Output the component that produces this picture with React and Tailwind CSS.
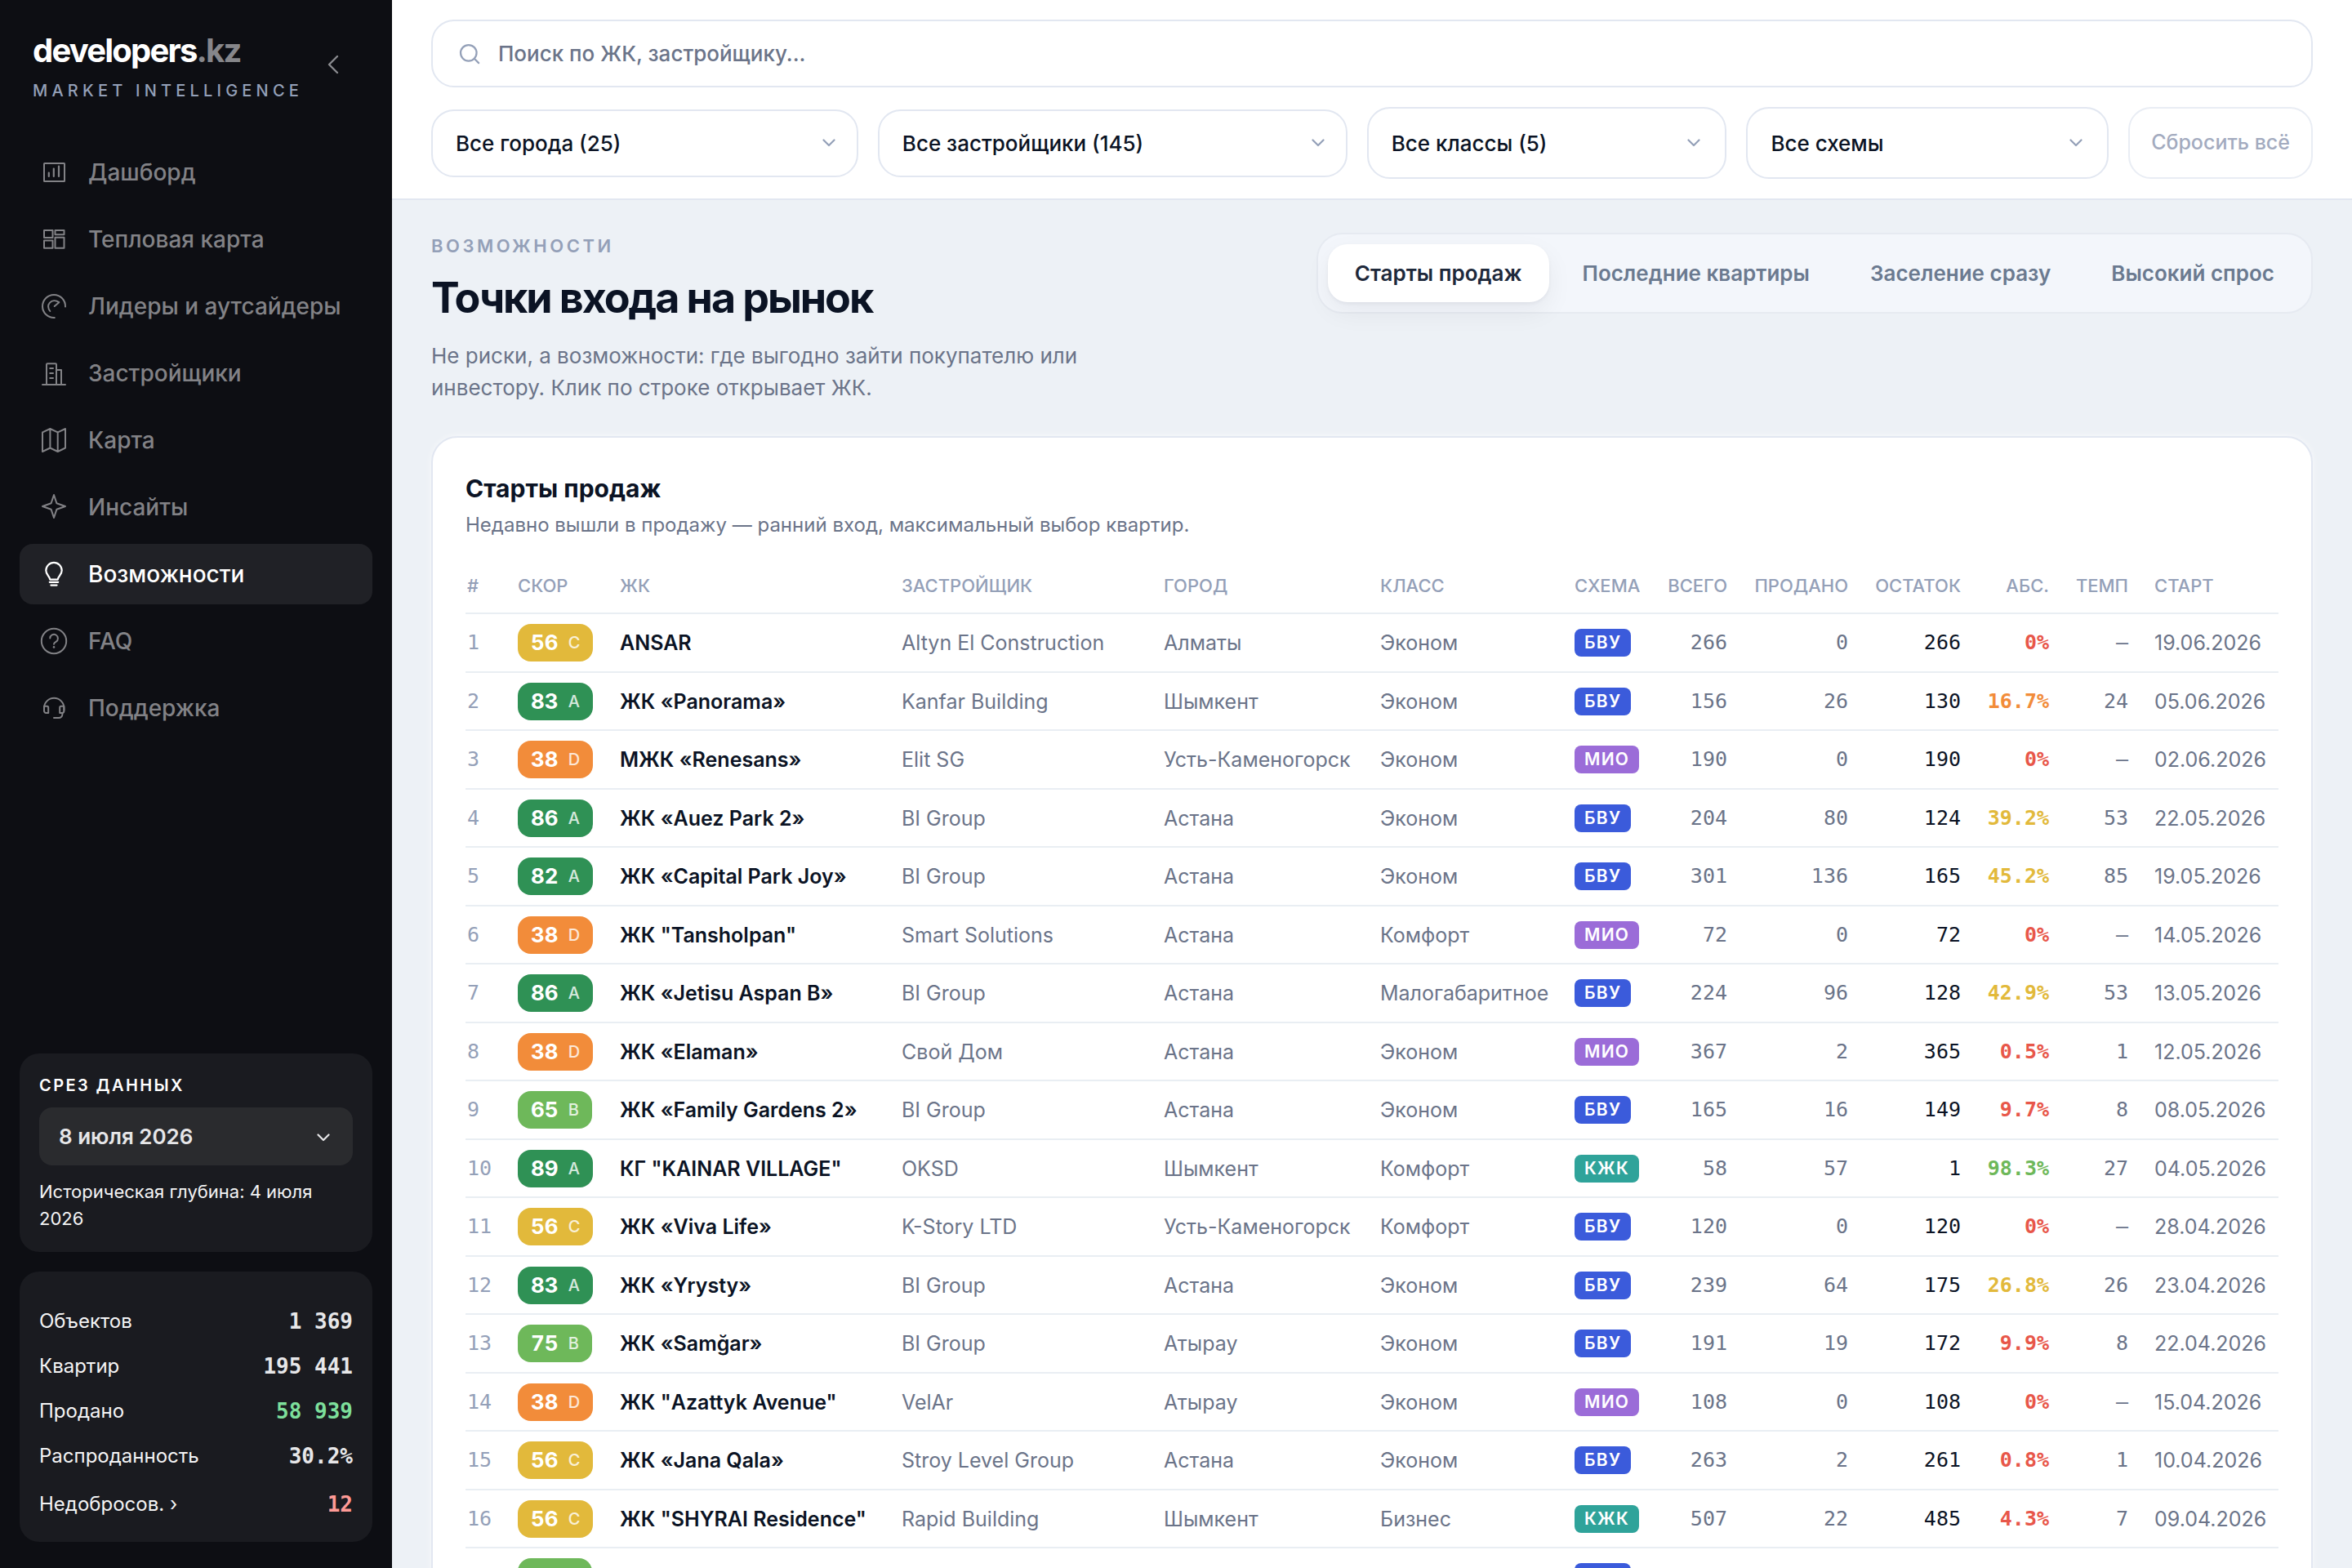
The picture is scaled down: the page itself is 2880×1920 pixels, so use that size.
import React from "react";

const MONO = "font-['DejaVu_Sans_Mono',monospace]";

function Icon({ children, className = "size-10" }) {
  return (
    <svg
      viewBox="0 0 40 40"
      className={className}
      fill="none"
      stroke="currentColor"
      strokeWidth="2"
      strokeLinecap="round"
      strokeLinejoin="round"
      aria-hidden="true"
    >
      {children}
    </svg>
  );
}

const NAV = [
  {
    label: "Дашборд",
    icon: (
      <Icon>
        <rect x="8" y="9" width="25" height="22" rx="0.5" />
        <path d="M13.8 20.5V25M19.8 15.5V25M26 12.5V25" strokeWidth="2.2" />
      </Icon>
    ),
  },
  {
    label: "Тепловая карта",
    icon: (
      <Icon>
        <rect x="8" y="9" width="10.5" height="9" />
        <rect x="21.5" y="9" width="11" height="5.2" />
        <rect x="8" y="21.5" width="10.5" height="9.2" />
        <rect x="21.5" y="17.8" width="11" height="12.9" />
      </Icon>
    ),
  },
  {
    label: "Лидеры и аутсайдеры",
    icon: (
      <Icon>
        <path d="M34 20.5A14 14 0 1 0 20.8 34" />
        <path d="M15.3 26C12.6 22.6 12.3 18.4 15 15.6C17.8 12.7 22.4 12.6 26.3 15.2L20.7 20" />
      </Icon>
    ),
  },
  {
    label: "Застройщики",
    icon: (
      <Icon>
        <path d="M6 34H34M11 34V9.2a1 1 0 0 1 1-1h10a1 1 0 0 1 1 1V34M23 16h6V34" />
        <path d="M15.2 14H19M15.2 20H19M15.2 26H19" />
      </Icon>
    ),
  },
  {
    label: "Карта",
    icon: (
      <Icon>
        <path d="M6 10.3L15.4 6L24.7 10.3L34 6V29.5L24.7 34L15.4 29.5L6 34ZM15.4 6V29.5M24.7 10.3V34" />
      </Icon>
    ),
  },
  {
    label: "Инсайты",
    icon: (
      <Icon>
        <path d="M20 5L23.4 15.3L34 19L23.4 22.7L20 33L16.6 22.7L6 19L16.6 15.3Z" />
      </Icon>
    ),
  },
  {
    label: "Возможности",
    active: true,
    icon: (
      <Icon>
        <path
          d="M15.2 26.6C15.2 22.8 10.3 21.3 10.3 15.6a9.7 9.7 0 0 1 19.4 0C29.7 21.3 24.8 22.8 24.8 26.6Z"
          strokeWidth="2.2"
        />
        <path d="M14.8 29.8H25.2M16.4 33.6H23.6" strokeWidth="2.2" />
      </Icon>
    ),
  },
  {
    label: "FAQ",
    icon: (
      <Icon>
        <circle cx="20" cy="20" r="15.2" />
        <path d="M15.3 16.6a4.8 4.8 0 1 1 7.2 4.2c-1.7 1-2.5 1.5-2.5 3" />
        <path d="M20 27.4v0.1" strokeWidth="2.6" />
      </Icon>
    ),
  },
  {
    label: "Поддержка",
    icon: (
      <Icon>
        <path d="M8 22.5V20a12 12 0 0 1 24.4 0V22.5" />
        <path d="M8 17.8h3.6a1.6 1.6 0 0 1 1.6 1.6V26H10.4A2.4 2.4 0 0 1 8 23.6Z" />
        <path d="M32.4 17.8h-3.6a1.6 1.6 0 0 0-1.6 1.6V26h2.8a2.4 2.4 0 0 0 2.4-2.4Z" />
        <path d="M30.4 26v1.6a4.4 4.4 0 0 1-4.4 4.4H20" />
      </Icon>
    ),
  },
];

const STATS = [
  { label: "Объектов", value: "1 369", color: "text-[#e7e7e9]" },
  { label: "Квартир", value: "195 441", color: "text-[#e7e7e9]" },
  { label: "Продано", value: "58 939", color: "text-[#7ddf9b]" },
  { label: "Распроданность", value: "30.2%", color: "text-[#e7e7e9]" },
  { label: "Недобросов. ›", value: "12", color: "text-[#ff9a96]" },
];

const FILTERS = [
  { id: "city", name: "Город", value: "Все города (25)", size: "flex-[522] h-[83px]", inset: "right-7" },
  { id: "developer", name: "Застройщик", value: "Все застройщики (145)", size: "flex-[574] h-[83px]", inset: "right-7" },
  { id: "class", name: "Класс", value: "Все классы (5)", size: "flex-[440] h-[88px]", inset: "right-8" },
  { id: "scheme", name: "Схема", value: "Все схемы", size: "flex-[443] h-[88px]", inset: "right-8" },
];

const TABS = ["Старты продаж", "Последние квартиры", "Заселение сразу", "Высокий спрос"];

const GRADE = {
  A: "bg-[#2f9155]",
  B: "bg-[#6eb85a]",
  C: "bg-[#e2b93b]",
  D: "bg-[#f28c3a]",
};

const SCHEME = {
  БВУ: "bg-[#3b5bdb]",
  МИО: "bg-[#9b6cd8]",
  КЖК: "bg-[#2fa39a]",
};

const RED = "text-[#e8574a]";
const ORANGE = "text-[#f28c3a]";
const YELLOW = "text-[#e2b93b]";
const GREEN = "text-[#6eb85a]";

const ROWS = [
  [56, "C", "ANSAR", "Altyn El Construction", "Алматы", "Эконом", "БВУ", "266", "0", "266", "0%", RED, "—", "19.06.2026"],
  [83, "A", "ЖК «Panorama»", "Kanfar Building", "Шымкент", "Эконом", "БВУ", "156", "26", "130", "16.7%", ORANGE, "24", "05.06.2026"],
  [38, "D", "МЖК «Renesans»", "Elit SG", "Усть-Каменогорск", "Эконом", "МИО", "190", "0", "190", "0%", RED, "—", "02.06.2026"],
  [86, "A", "ЖК «Auez Park 2»", "BI Group", "Астана", "Эконом", "БВУ", "204", "80", "124", "39.2%", YELLOW, "53", "22.05.2026"],
  [82, "A", "ЖК «Capital Park Joy»", "BI Group", "Астана", "Эконом", "БВУ", "301", "136", "165", "45.2%", YELLOW, "85", "19.05.2026"],
  [38, "D", 'ЖК "Tansholpan"', "Smart Solutions", "Астана", "Комфорт", "МИО", "72", "0", "72", "0%", RED, "—", "14.05.2026"],
  [86, "A", "ЖК «Jetisu Aspan B»", "BI Group", "Астана", "Малогабаритное", "БВУ", "224", "96", "128", "42.9%", YELLOW, "53", "13.05.2026"],
  [38, "D", "ЖК «Elaman»", "Свой Дом", "Астана", "Эконом", "МИО", "367", "2", "365", "0.5%", RED, "1", "12.05.2026"],
  [65, "B", "ЖК «Family Gardens 2»", "BI Group", "Астана", "Эконом", "БВУ", "165", "16", "149", "9.7%", RED, "8", "08.05.2026"],
  [89, "A", 'КГ "KAINAR VILLAGE"', "OKSD", "Шымкент", "Комфорт", "КЖК", "58", "57", "1", "98.3%", GREEN, "27", "04.05.2026"],
  [56, "C", "ЖК «Viva Life»", "K-Story LTD", "Усть-Каменогорск", "Комфорт", "БВУ", "120", "0", "120", "0%", RED, "—", "28.04.2026"],
  [83, "A", "ЖК «Yrysty»", "BI Group", "Астана", "Эконом", "БВУ", "239", "64", "175", "26.8%", YELLOW, "26", "23.04.2026"],
  [75, "B", "ЖК «Samğar»", "BI Group", "Атырау", "Эконом", "БВУ", "191", "19", "172", "9.9%", RED, "8", "22.04.2026"],
  [38, "D", 'ЖК "Azattyk Avenue"', "VelAr", "Атырау", "Эконом", "МИО", "108", "0", "108", "0%", RED, "—", "15.04.2026"],
  [56, "C", "ЖК «Jana Qala»", "Stroy Level Group", "Астана", "Эконом", "БВУ", "263", "2", "261", "0.8%", RED, "1", "10.04.2026"],
  [56, "C", 'ЖК "SHYRAI Residence"', "Rapid Building", "Шымкент", "Бизнес", "КЖК", "507", "22", "485", "4.3%", RED, "7", "09.04.2026"],
  [65, "B", "", "", "", "", "БВУ", "", "", "", "", RED, "", ""],
];

const COLUMNS = [
  { label: "#", width: "w-[48px]", align: "text-left" },
  { label: "Скор", width: "w-[125px]", align: "text-left" },
  { label: "ЖК", width: "w-[345px]", align: "text-left" },
  { label: "Застройщик", width: "w-[321px]", align: "text-left" },
  { label: "Город", width: "w-[265px]", align: "text-left" },
  { label: "Класс", width: "w-[238px]", align: "text-left" },
  { label: "Схема", width: "w-[114px]", align: "text-left" },
  { label: "Всего", width: "w-[105px]", align: "text-right" },
  { label: "Продано", width: "w-[148px]", align: "text-right" },
  { label: "Остаток", width: "w-[138px]", align: "text-right" },
  { label: "Абс.", width: "w-[108px]", align: "text-right" },
  { label: "Темп", width: "w-[97px]", align: "text-right" },
  { label: "Старт", width: "w-[168px]", align: "text-left" },
];

function Chevron({ className }) {
  return (
    <svg
      viewBox="0 0 16 10"
      className={className}
      fill="none"
      stroke="currentColor"
      strokeWidth="2.2"
      strokeLinecap="round"
      strokeLinejoin="round"
      aria-hidden="true"
    >
      <path d="M1.5 1.5L8 8L14.5 1.5" />
    </svg>
  );
}

function Sidebar() {
  return (
    <aside className="flex w-[480px] shrink-0 flex-col bg-[#0d0e13] px-6 pt-10 pb-8 text-white">
      <div className="flex items-start justify-between pr-6 pl-4">
        <div>
          <a href="#home" className="block text-[40px] leading-11 font-bold tracking-[-0.045em]">
            developers<span className="text-[#86868a]">.kz</span>
          </a>
          <div className="mt-3 text-[20px] leading-[30px] font-medium tracking-[0.26em] whitespace-nowrap text-[#94a0b8]">
            MARKET INTELLIGENCE
          </div>
        </div>
        <button
          type="button"
          aria-label="Свернуть меню"
          className="-ml-8 mt-[15px] flex size-12 shrink-0 items-center justify-center text-[#8a8b8f]"
        >
          <svg
            viewBox="0 0 14 24"
            className="h-6 w-3.5"
            fill="none"
            stroke="currentColor"
            strokeWidth="2.4"
            strokeLinecap="round"
            strokeLinejoin="round"
            aria-hidden="true"
          >
            <path d="M12 2L2 12L12 22" />
          </svg>
        </button>
      </div>

      <nav className="mt-12 flex flex-col gap-2">
        {NAV.map((item) => (
          <a
            key={item.label}
            href={"#" + item.label}
            aria-current={item.active ? "page" : undefined}
            className={
              "flex h-[74px] items-center gap-[22px] rounded-2xl px-[22px] text-[28px] leading-[42px] font-medium " +
              (item.active ? "bg-[#202126] text-white" : "text-[#828286]")
            }
          >
            {item.icon}
            <span>{item.label}</span>
          </a>
        ))}
      </nav>

      <div className="mt-auto flex flex-col gap-6">
        <section className="rounded-3xl bg-[#1a1b20] p-6">
          <label
            htmlFor="snapshot"
            className="block text-[20px] leading-[30px] font-semibold tracking-[0.12em] text-white uppercase"
          >
            Срез данных
          </label>
          <div className="relative mt-3">
            <select
              id="snapshot"
              className="h-[71px] w-full appearance-none rounded-2xl bg-[#2a2b2e] px-6 text-[26px] font-semibold text-[#e6e6e8]"
            >
              <option>8 июля 2026</option>
            </select>
            <Chevron className="pointer-events-none absolute top-8 right-7 h-2.5 w-4 text-[#e6e6e8]" />
          </div>
          <p className="mt-4 text-[22px] leading-[33px] text-[#f4f4f5]">Историческая глубина: 4 июля 2026</p>
        </section>

        <dl className="rounded-3xl bg-[#1a1b20] px-6 pt-[33px] pb-[19px]">
          {STATS.map((s) => (
            <div key={s.label} className="flex h-[55px] items-center justify-between last:mt-1">
              <dt className="text-[24px] leading-9 text-[#f4f4f5]">{s.label}</dt>
              <dd className={`${MONO} text-[26px] leading-9 font-bold ${s.color}`}>{s.value}</dd>
            </div>
          ))}
        </dl>
      </div>
    </aside>
  );
}

function Toolbar() {
  return (
    <header className="border-b-2 border-[#e2e7f1] bg-white px-12 py-6">
      <div className="flex h-[83px] items-center gap-[22px] rounded-[28px] border-2 border-[#e2e7f1] px-8 text-[#94a0b8]">
        <svg
          viewBox="0 0 28 28"
          className="size-[26px] shrink-0"
          fill="none"
          stroke="currentColor"
          strokeWidth="2.4"
          strokeLinecap="round"
          aria-hidden="true"
        >
          <circle cx="12.7" cy="12.7" r="10.5" />
          <path d="M20.5 20.5L26 26" />
        </svg>
        <input
          type="search"
          aria-label="Поиск"
          placeholder="Поиск по ЖК, застройщику..."
          className="h-full w-full bg-transparent text-[26px] font-medium text-[#0b1324] outline-none placeholder:text-[#6b7489]"
        />
      </div>
      <div className="mt-6 flex items-center gap-6">
        {FILTERS.map((f) => (
          <div key={f.id} className={"relative " + f.size}>
            <select
              id={f.id}
              aria-label={f.name}
              className="h-full w-full appearance-none rounded-[28px] border-2 border-[#e2e7f1] bg-white px-7 text-[26px] font-medium text-[#0b1324]"
            >
              <option>{f.value}</option>
            </select>
            <div className={"pointer-events-none absolute inset-y-0 flex items-center " + f.inset}>
              <Chevron className="h-2.5 w-4 text-[#94a0b8]" />
            </div>
          </div>
        ))}
        <button
          type="button"
          className="h-[88px] rounded-[28px] border-2 border-[#e9edf4] px-[26px] text-[25px] font-medium whitespace-nowrap text-[#a3abbf]"
        >
          Сбросить всё
        </button>
      </div>
    </header>
  );
}

function DealsTable() {
  const cell = "border-b-2 border-[#e9eef3] p-0 px-4 whitespace-nowrap first:pl-0.5";
  return (
    <table className="mt-6 w-full table-fixed border-separate border-spacing-0 text-[25px] leading-9 text-[#6b7489]">
      <thead>
        <tr>
          {COLUMNS.map((c) => (
            <th
              key={c.label}
              scope="col"
              className={`${c.width} ${c.align} border-b-2 border-[#e9eef3] px-4 py-4 text-[22px] leading-[33px] font-medium whitespace-nowrap text-[#94a0b8] uppercase first:pl-0.5`}
            >
              {c.label}
            </th>
          ))}
        </tr>
      </thead>
      <tbody>
        {ROWS.map(([score, grade, name, dev, city, cls, scheme, total, sold, left, abs, absColor, pace, start], i) => (
          <tr key={i} className="h-[72px] even:h-[71px]">
            <td className={`${cell} ${MONO} pr-0 text-[#94a0b8]`}>{i + 1}</td>
            <td className={cell}>
              <span
                className={`flex h-[46px] w-fit items-center gap-3 rounded-2xl px-4 text-[26px] font-bold text-white tabular-nums ${GRADE[grade]}`}
              >
                {score}
                <span className="text-[20px] font-medium text-white/80">{grade}</span>
              </span>
            </td>
            <td className={`${cell} font-semibold text-[#0b1324]`}>{name}</td>
            <td className={cell}>{dev}</td>
            <td className={cell}>{city}</td>
            <td className={cell}>{cls}</td>
            <td className={`${cell} pr-0`}>
              <span
                className={`flex h-[34px] w-fit items-center rounded-lg px-3 text-[21px] font-semibold tracking-[0.06em] text-white ${SCHEME[scheme]}`}
              >
                {scheme}
              </span>
            </td>
            <td className={`${cell} ${MONO} text-right`}>{total}</td>
            <td className={`${cell} ${MONO} text-right`}>{sold}</td>
            <td className={`${cell} ${MONO} text-right text-[#0b1324]`}>{left}</td>
            <td className={`${cell} ${MONO} pl-0 text-right font-bold ${absColor}`}>{abs}</td>
            <td className={`${cell} ${MONO} text-right`}>{pace}</td>
            <td className={cell}>{start}</td>
          </tr>
        ))}
      </tbody>
    </table>
  );
}

export default function App() {
  return (
    <div className="flex h-screen overflow-hidden bg-[#edf1f6] font-[Inter,sans-serif] text-[#0b1324] antialiased">
      <Sidebar />
      <div className="flex min-w-0 flex-1 flex-col">
        <Toolbar />
        <main className="min-h-0 flex-1 overflow-hidden px-12 pt-10">
          <div className="flex items-start justify-between gap-12">
            <div>
              <div className="text-[22px] leading-8 font-semibold tracking-[0.16em] text-[#94a0b8] uppercase">
                Возможности
              </div>
              <h1 className="mt-4 text-[52px] leading-16 font-bold tracking-[-0.04em]">Точки входа на рынок</h1>
              <p className="mt-[19px] max-w-[860px] text-[26px] leading-[39px] text-[#6b7489]">
                Не риски, а возможности: где выгодно зайти покупателю или инвестору. Клик по строке открывает ЖК.
              </p>
            </div>
            <div
              role="tablist"
              className="flex shrink-0 gap-2 rounded-[32px] border-2 border-[#e6eaf1] bg-[#f3f6fb] p-3"
            >
              {TABS.map((t, i) => (
                <button
                  key={t}
                  type="button"
                  role="tab"
                  aria-selected={i === 0}
                  className={
                    "rounded-3xl px-[33px] py-4 text-[26px] leading-[39px] font-semibold whitespace-nowrap " +
                    (i === 0
                      ? "bg-white text-[#1e293b] shadow-[0_2px_4px_rgba(15,23,42,0.05),0_12px_32px_rgba(15,23,42,0.06)]"
                      : "text-[#6b7a90]")
                  }
                >
                  {t}
                </button>
              ))}
            </div>
          </div>

          <section className="mt-10 rounded-[32px] border-2 border-[#e2e7f1] bg-white p-10 shadow-[0_0_8px_rgba(255,255,255,0.6)]">
            <h2 className="text-[30px] leading-[45px] font-bold">Старты продаж</h2>
            <p className="mt-1 text-[24px] leading-9 text-[#6b7489]">
              Недавно вышли в продажу — ранний вход, максимальный выбор квартир.
            </p>
            <DealsTable />
          </section>
        </main>
      </div>
    </div>
  );
}
